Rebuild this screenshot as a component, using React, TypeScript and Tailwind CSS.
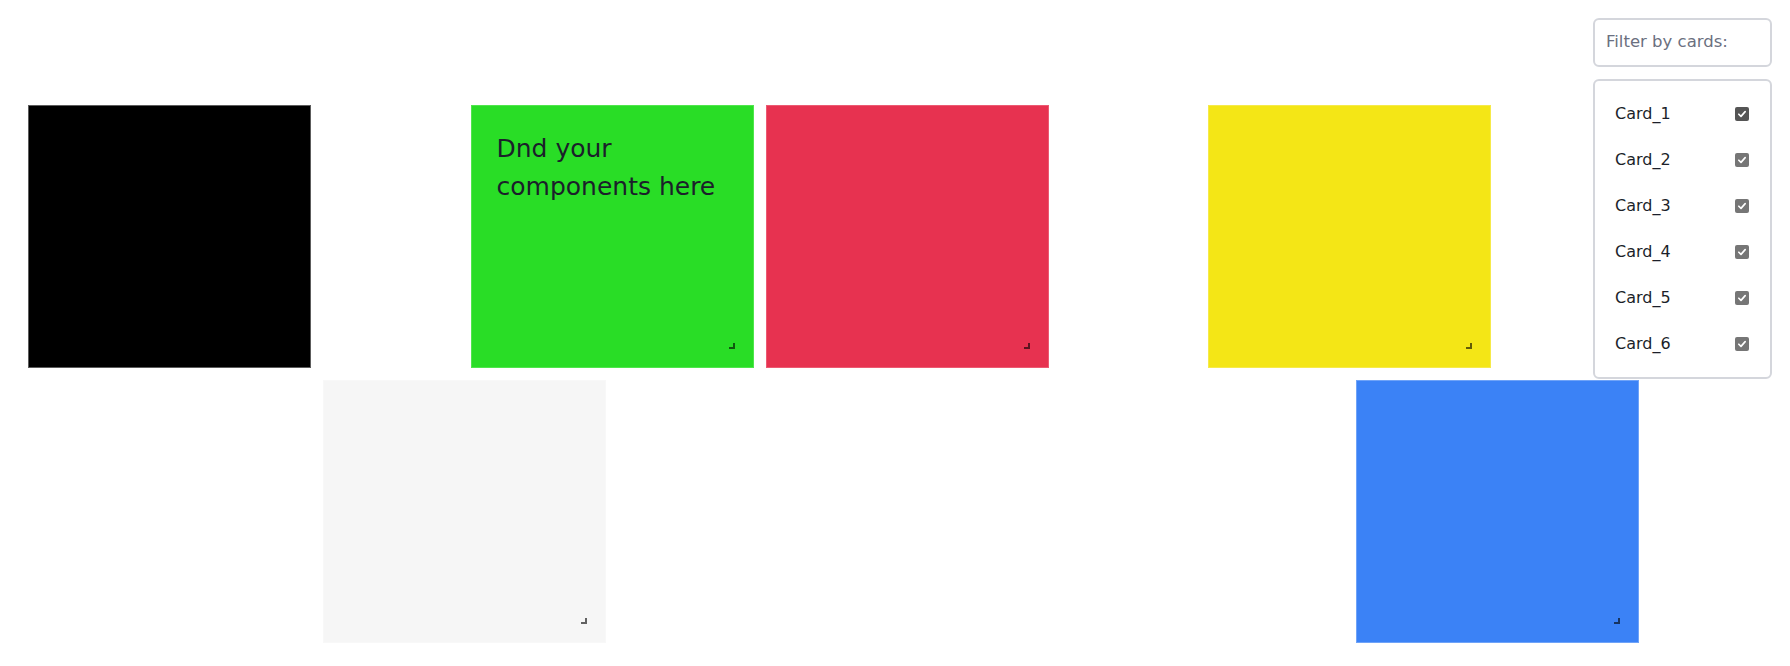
import { useState } from "react";

interface Card {
  id: string;
  col: string;
  row: string;
  bg: string;
  text?: string;
  handle: boolean;
}

const cards: Card[] = [
  { id: "Card_1", col: "col-start-1", row: "row-start-1", bg: "bg-black border border-[#5c5c5c]", handle: false },
  { id: "Card_2", col: "col-start-4", row: "row-start-1", bg: "bg-[#29dd26] border border-[#4fe64c]", text: "Dnd your components here", handle: true },
  { id: "Card_3", col: "col-start-6", row: "row-start-1", bg: "bg-[#e73250] border border-[#ec5a72]", handle: true },
  { id: "Card_4", col: "col-start-9", row: "row-start-1", bg: "bg-[#f4e616] border border-[#f6ea4a]", handle: true },
  { id: "Card_5", col: "col-start-3", row: "row-start-2", bg: "bg-[#f6f6f6] border border-[#f8f8f8]", handle: true },
  { id: "Card_6", col: "col-start-10", row: "row-start-2", bg: "bg-[#3b82f6] border border-[#6fa3f8]", handle: true },
];

export default function App() {
  const [checked, setChecked] = useState<Record<string, boolean>>(
    Object.fromEntries(cards.map((c) => [c.id, true]))
  );

  return (
    <div className="relative w-[1790px] h-[666px] bg-white overflow-hidden font-['DejaVu_Sans',sans-serif]">
      {/* grid de cards */}
      <div className="grid grid-cols-[repeat(12,135.5px)] grid-rows-[repeat(2,263px)] gap-3 pl-[28px] pt-[105px]">
        {cards.map((c) =>
          checked[c.id] ? (
            <div key={c.id} className={`${c.col} ${c.row} col-span-2 relative ${c.bg}`}>
              {c.text && (
                <p className="pl-[25px] pr-2 pt-[24px] text-[25px] leading-[38px] text-[#1b1f2a]">
                  Dnd your
                  <br />
                  components here
                </p>
              )}
              {c.handle && (
                <span className="absolute right-[18px] bottom-[18px] w-[6px] h-[6px] border-r-2 border-b-2 border-black/60" />
              )}
            </div>
          ) : null
        )}
      </div>

      {/* filtro */}
      <div className="absolute right-[18px] top-[18px] w-[179px] flex flex-col gap-3">
        <div className="h-[49px] border-2 border-[#d4d6dc] rounded-md flex items-center px-[11px] text-[16.5px] text-[#6b7080]">
          Filter by cards:
        </div>
        <div className="border-2 border-[#d4d6dc] rounded-md py-[10px] pl-[20px] pr-[21px]">
          {cards.map((c, i) => (
            <label
              key={c.id}
              className="h-[46px] flex items-center justify-between text-[16px] text-[#1c1f2a] cursor-pointer"
            >
              <span>{c.id}</span>
              <span
                onClick={() => setChecked({ ...checked, [c.id]: !checked[c.id] })}
                className={`w-[14px] h-[14px] rounded-[2px] flex items-center justify-center ${
                  checked[c.id] ? (i === 0 ? "bg-[#555555]" : "bg-[#767676]") : "border border-[#767676] bg-white"
                }`}
              >
                {checked[c.id] && (
                  <svg viewBox="0 0 12 12" className="w-[10px] h-[10px]">
                    <path d="M2.2 6.3 L4.8 8.8 L9.8 3.2" fill="none" stroke="white" strokeWidth="2" strokeLinecap="round" strokeLinejoin="round" />
                  </svg>
                )}
              </span>
            </label>
          ))}
        </div>
      </div>
    </div>
  );
}
